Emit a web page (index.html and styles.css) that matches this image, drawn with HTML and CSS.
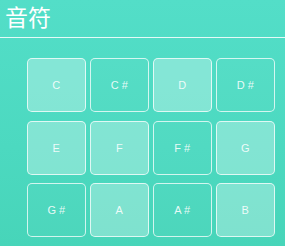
FILE: index.html
```html
<!DOCTYPE html>
<html lang="zh">
<head>
<meta charset="utf-8">
<title>音符</title>
<link rel="stylesheet" href="styles.css">
</head>
<body>
<div class="page">
  <header class="header">
    <h1 class="title">音符</h1>
  </header>
  <div class="keys">
    <div class="key light">C</div>
    <div class="key dark">C #</div>
    <div class="key light">D</div>
    <div class="key dark">D #</div>
    <div class="key light">E</div>
    <div class="key light">F</div>
    <div class="key dark">F #</div>
    <div class="key light">G</div>
    <div class="key dark">G #</div>
    <div class="key light">A</div>
    <div class="key dark">A #</div>
    <div class="key light">B</div>
  </div>
</div>
</body>
</html>
```
FILE: styles.css
```css
html, body {
  margin: 0;
  padding: 0;
}
body {
  width: 285px;
  height: 246px;
  overflow: hidden;
  background: linear-gradient(180deg, #53dec8 0%, #4cd9c0 60%, #47d5b9 100%);
  font-family: "Liberation Sans", "Noto Sans CJK SC", sans-serif;
  color: #fff;
}
.page {
  display: flex;
  flex-direction: column;
}
.header {
  box-sizing: border-box;
  height: 38px;
  border-bottom: 1px solid rgba(255, 255, 255, 0.85);
  padding-left: 5px;
}
.title {
  margin: 0;
  font-family: "Noto Sans CJK SC", sans-serif;
  font-weight: 400;
  font-size: 23px;
  line-height: 33px;
  color: #fff;
}
.keys {
  margin: 20px 0 0 27px;
  display: grid;
  grid-template-columns: repeat(4, 58.5px);
  grid-auto-rows: 54px;
  column-gap: 4.5px;
  row-gap: 8.5px;
}
.key {
  box-sizing: border-box;
  border: 1px solid rgba(255, 255, 255, 0.75);
  border-radius: 5px;
  display: flex;
  align-items: center;
  justify-content: center;
  font-size: 11px;
  color: rgba(255, 255, 255, 0.88);
}
.light {
  background: rgba(255, 255, 255, 0.3);
}
.dark {
  background: rgba(255, 255, 255, 0.03);
}
```
